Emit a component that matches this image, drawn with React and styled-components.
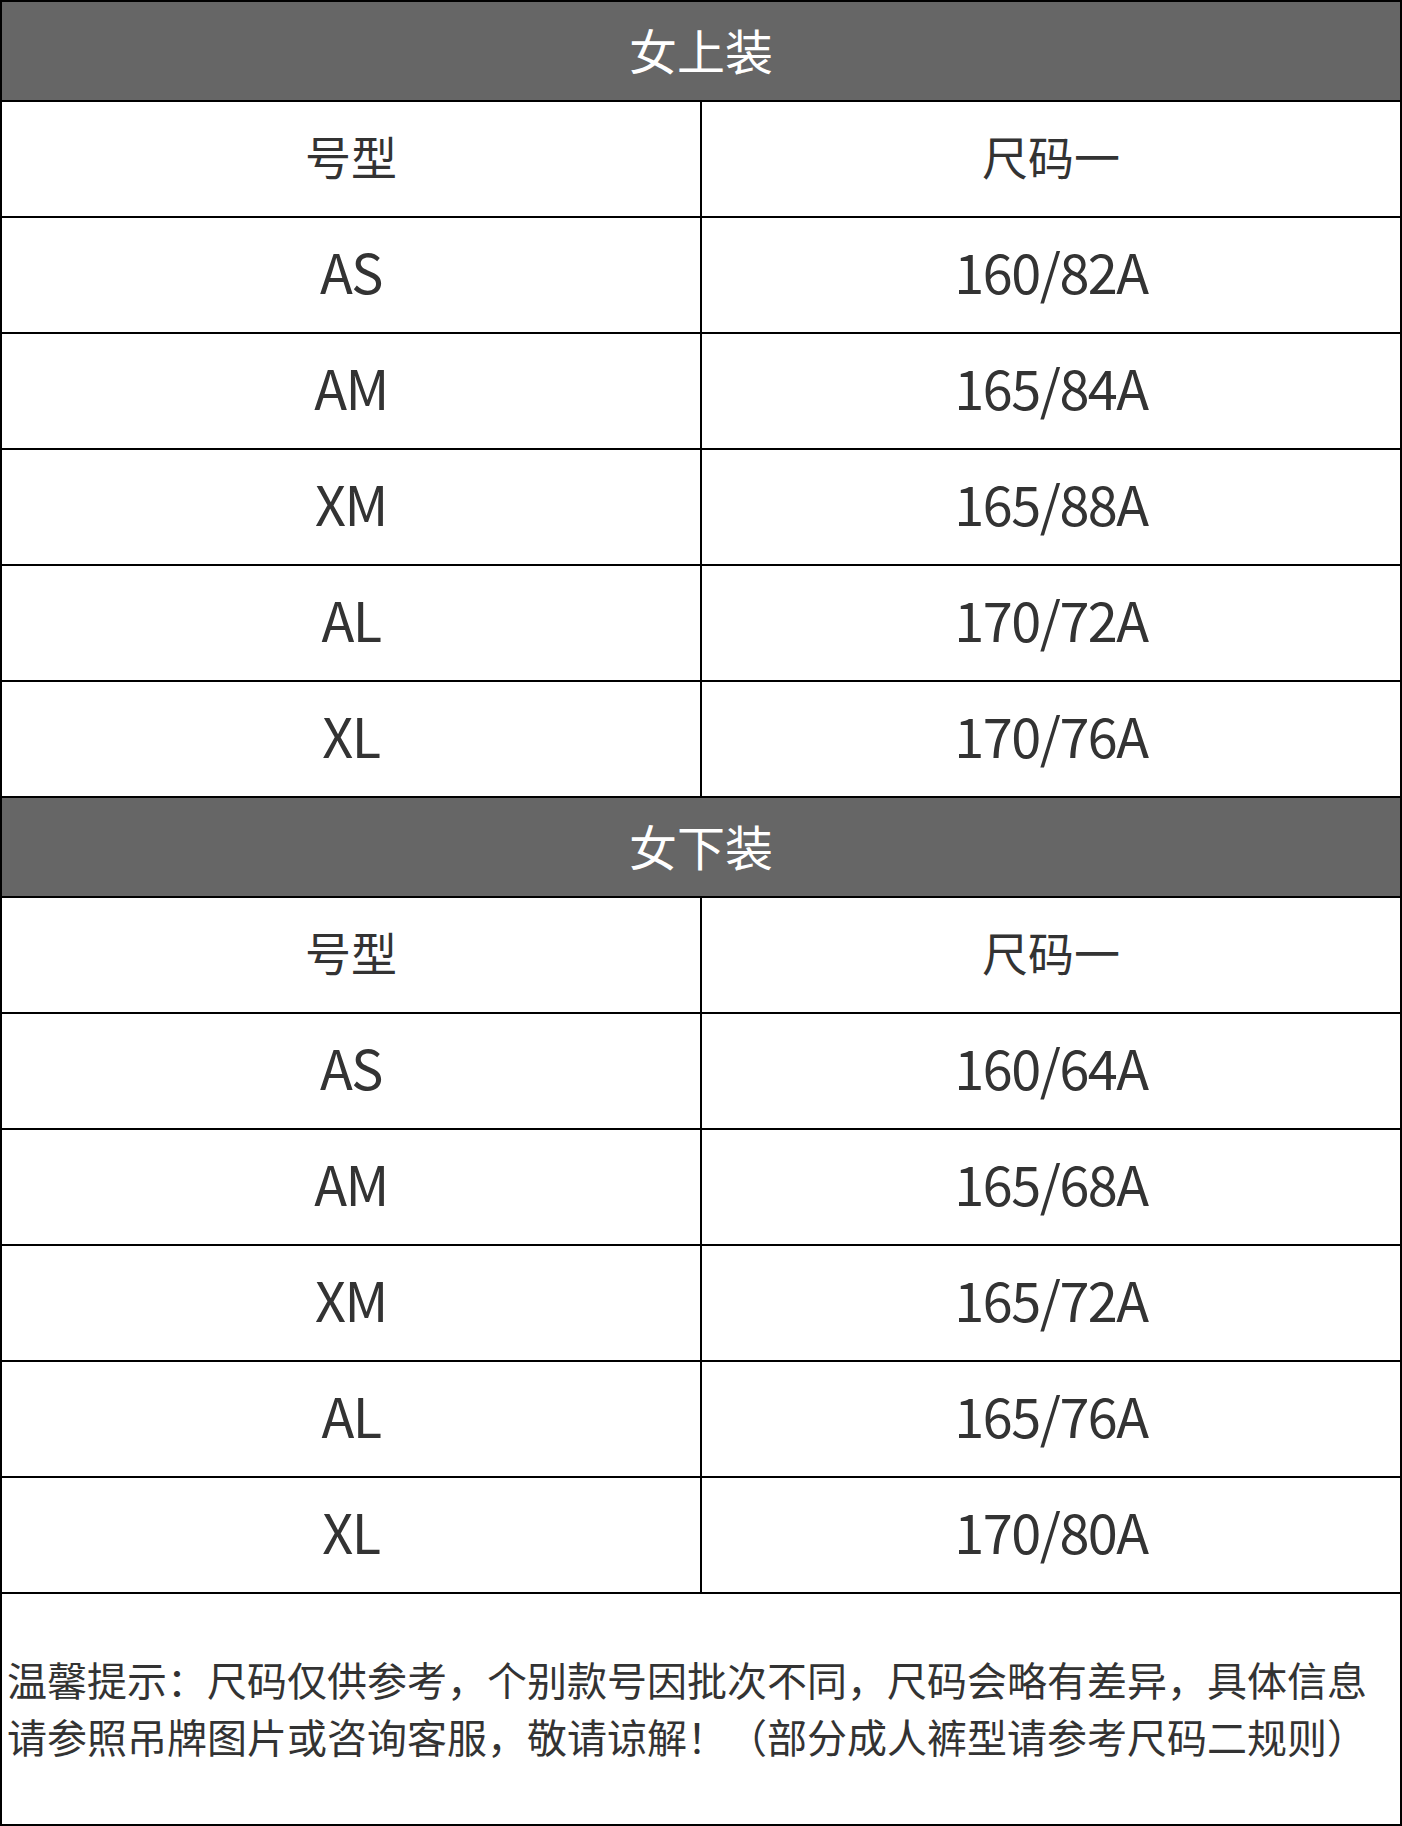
import React from "react";
import styled, { createGlobalStyle } from "styled-components";

const GlobalStyle = createGlobalStyle`
  html, body {
    margin: 0;
    padding: 0;
    background: #fff;
  }
  body {
    font-family: "Noto Sans CJK SC", "Noto Sans", sans-serif;
    color: #333;
  }
`;

const Sheet = styled.div`
  width: 1402px;
  box-sizing: border-box;
  border: 2px solid #000;
  display: flex;
  flex-direction: column;
`;

const SectionTitle = styled.div`
  height: 100px;
  box-sizing: border-box;
  padding-bottom: 5px;
  background: #666;
  border-bottom: 2px solid #000;
  color: #fff;
  font-size: 48px;
  display: flex;
  align-items: center;
  justify-content: center;
`;

const Row = styled.div`
  display: grid;
  grid-template-columns: 698px 698px;
  column-gap: 2px;
  background: #000;
  border-bottom: 2px solid #000;
`;

const Cell = styled.div`
  height: 114px;
  box-sizing: border-box;
  padding-bottom: 9px;
  background: #fff;
  display: flex;
  align-items: center;
  justify-content: center;
  color: #333;
  font-size: ${(p) => (p.$latin ? "54px" : "46px")};
  letter-spacing: ${(p) => (p.$latin ? "-1.5px" : "0")};
`;

const Note = styled.div`
  height: 230px;
  box-sizing: border-box;
  padding: 0 4px 2px 5px;
  display: flex;
  align-items: center;
  font-size: 40px;
  line-height: 57px;
  color: #333;
`;

const tops = [
  ["AS", "160/82A"],
  ["AM", "165/84A"],
  ["XM", "165/88A"],
  ["AL", "170/72A"],
  ["XL", "170/76A"],
];

const bottoms = [
  ["AS", "160/64A"],
  ["AM", "165/68A"],
  ["XM", "165/72A"],
  ["AL", "165/76A"],
  ["XL", "170/80A"],
];

const Section = ({ title, rows }) => (
  <>
    <SectionTitle>{title}</SectionTitle>
    <Row>
      <Cell>号型</Cell>
      <Cell>尺码一</Cell>
    </Row>
    {rows.map(([size, spec]) => (
      <Row key={size}>
        <Cell $latin>{size}</Cell>
        <Cell $latin>{spec}</Cell>
      </Row>
    ))}
  </>
);

export default function App() {
  return (
    <>
      <GlobalStyle />
      <Sheet>
        <Section title="女上装" rows={tops} />
        <Section title="女下装" rows={bottoms} />
        <Note>
          温馨提示：尺码仅供参考，个别款号因批次不同，尺码会略有差异，具体信息请参照吊牌图片或咨询客服，敬请谅解！（部分成人裤型请参考尺码二规则）
        </Note>
      </Sheet>
    </>
  );
}
